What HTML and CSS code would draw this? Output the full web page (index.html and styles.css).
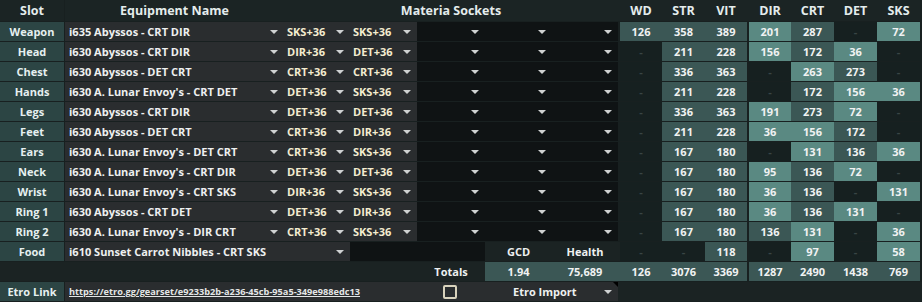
FILE: index.html
```html
<!DOCTYPE html>
<html>
<head>
<meta charset="utf-8">
<link rel="stylesheet" href="styles.css">
</head>
<body>
<div class="sheet">
  <div class="hd c-slot">Slot</div>
  <div class="hd c-eq">Equipment Name</div>
  <div class="hd c-mat">Materia Sockets</div>
  <div class="hd c-sp"></div>
  <div class="hd c-wd">WD</div>
  <div class="hd c-str">STR</div>
  <div class="hd c-vit">VIT</div>
  <div class="hd c-sp2"></div>
  <div class="hd c-dir">DIR</div>
  <div class="hd c-crt">CRT</div>
  <div class="hd c-det">DET</div>
  <div class="hd c-sks">SKS</div>

  <div class="slot c-slot">Weapon</div>
  <div class="eq c-eq"><span>i635 Abyssos - CRT DIR</span><i class="dd"></i></div>
  <div class="mat c-m1"><span>SKS+36</span><i class="dd"></i></div>
  <div class="mat c-m2"><span>SKS+36</span><i class="dd"></i></div>
  <div class="emp c-m3"><i class="dd"></i></div>
  <div class="emp c-m4"><i class="dd"></i></div>
  <div class="emp c-m5"><i class="dd"></i></div>
  <div class="st m c-wd">126</div><div class="st m c-str">358</div><div class="st m c-vit">389</div>
  <div class="st l c-dir">201</div><div class="st m c-crt">287</div><div class="st d c-det">-</div><div class="st l c-sks">72</div>

  <div class="slot c-slot">Head</div>
  <div class="eq c-eq"><span>i630 Abyssos - CRT DIR</span><i class="dd"></i></div>
  <div class="mat c-m1"><span>DIR+36</span><i class="dd"></i></div>
  <div class="mat c-m2"><span>DET+36</span><i class="dd"></i></div>
  <div class="emp c-m3"><i class="dd"></i></div>
  <div class="emp c-m4"><i class="dd"></i></div>
  <div class="emp c-m5"><i class="dd"></i></div>
  <div class="st d c-wd">-</div><div class="st m c-str">211</div><div class="st m c-vit">228</div>
  <div class="st l c-dir">156</div><div class="st m c-crt">172</div><div class="st l c-det">36</div><div class="st d c-sks">-</div>

  <div class="slot c-slot">Chest</div>
  <div class="eq c-eq"><span>i630 Abyssos - DET CRT</span><i class="dd"></i></div>
  <div class="mat c-m1"><span>CRT+36</span><i class="dd"></i></div>
  <div class="mat c-m2"><span>CRT+36</span><i class="dd"></i></div>
  <div class="emp c-m3"><i class="dd"></i></div>
  <div class="emp c-m4"><i class="dd"></i></div>
  <div class="emp c-m5"><i class="dd"></i></div>
  <div class="st d c-wd">-</div><div class="st m c-str">336</div><div class="st m c-vit">363</div>
  <div class="st d c-dir">-</div><div class="st l c-crt">263</div><div class="st m c-det">273</div><div class="st d c-sks">-</div>

  <div class="slot c-slot">Hands</div>
  <div class="eq c-eq"><span>i630 A. Lunar Envoy's - CRT DET</span><i class="dd"></i></div>
  <div class="mat c-m1"><span>DET+36</span><i class="dd"></i></div>
  <div class="mat c-m2"><span>SKS+36</span><i class="dd"></i></div>
  <div class="emp c-m3"><i class="dd"></i></div>
  <div class="emp c-m4"><i class="dd"></i></div>
  <div class="emp c-m5"><i class="dd"></i></div>
  <div class="st d c-wd">-</div><div class="st m c-str">211</div><div class="st m c-vit">228</div>
  <div class="st d c-dir">-</div><div class="st m c-crt">172</div><div class="st l c-det">156</div><div class="st l c-sks">36</div>

  <div class="slot c-slot">Legs</div>
  <div class="eq c-eq"><span>i630 Abyssos - CRT DIR</span><i class="dd"></i></div>
  <div class="mat c-m1"><span>DET+36</span><i class="dd"></i></div>
  <div class="mat c-m2"><span>DET+36</span><i class="dd"></i></div>
  <div class="emp c-m3"><i class="dd"></i></div>
  <div class="emp c-m4"><i class="dd"></i></div>
  <div class="emp c-m5"><i class="dd"></i></div>
  <div class="st d c-wd">-</div><div class="st m c-str">336</div><div class="st m c-vit">363</div>
  <div class="st l c-dir">191</div><div class="st m c-crt">273</div><div class="st l c-det">72</div><div class="st d c-sks">-</div>

  <div class="slot c-slot">Feet</div>
  <div class="eq c-eq"><span>i630 Abyssos - DET CRT</span><i class="dd"></i></div>
  <div class="mat c-m1"><span>CRT+36</span><i class="dd"></i></div>
  <div class="mat c-m2"><span>DIR+36</span><i class="dd"></i></div>
  <div class="emp c-m3"><i class="dd"></i></div>
  <div class="emp c-m4"><i class="dd"></i></div>
  <div class="emp c-m5"><i class="dd"></i></div>
  <div class="st d c-wd">-</div><div class="st m c-str">211</div><div class="st m c-vit">228</div>
  <div class="st l c-dir">36</div><div class="st l c-crt">156</div><div class="st m c-det">172</div><div class="st d c-sks">-</div>

  <div class="slot c-slot">Ears</div>
  <div class="eq c-eq"><span>i630 A. Lunar Envoy's - DET CRT</span><i class="dd"></i></div>
  <div class="mat c-m1"><span>CRT+36</span><i class="dd"></i></div>
  <div class="mat c-m2"><span>SKS+36</span><i class="dd"></i></div>
  <div class="emp c-m3"><i class="dd"></i></div>
  <div class="emp c-m4"><i class="dd"></i></div>
  <div class="emp c-m5"><i class="dd"></i></div>
  <div class="st d c-wd">-</div><div class="st m c-str">167</div><div class="st m c-vit">180</div>
  <div class="st d c-dir">-</div><div class="st l c-crt">131</div><div class="st m c-det">136</div><div class="st l c-sks">36</div>

  <div class="slot c-slot">Neck</div>
  <div class="eq c-eq"><span>i630 A. Lunar Envoy's - CRT DIR</span><i class="dd"></i></div>
  <div class="mat c-m1"><span>DET+36</span><i class="dd"></i></div>
  <div class="mat c-m2"><span>DET+36</span><i class="dd"></i></div>
  <div class="emp c-m3"><i class="dd"></i></div>
  <div class="emp c-m4"><i class="dd"></i></div>
  <div class="emp c-m5"><i class="dd"></i></div>
  <div class="st d c-wd">-</div><div class="st m c-str">167</div><div class="st m c-vit">180</div>
  <div class="st l c-dir">95</div><div class="st m c-crt">136</div><div class="st l c-det">72</div><div class="st d c-sks">-</div>

  <div class="slot c-slot">Wrist</div>
  <div class="eq c-eq"><span>i630 A. Lunar Envoy's - CRT SKS</span><i class="dd"></i></div>
  <div class="mat c-m1"><span>DIR+36</span><i class="dd"></i></div>
  <div class="mat c-m2"><span>SKS+36</span><i class="dd"></i></div>
  <div class="emp c-m3"><i class="dd"></i></div>
  <div class="emp c-m4"><i class="dd"></i></div>
  <div class="emp c-m5"><i class="dd"></i></div>
  <div class="st d c-wd">-</div><div class="st m c-str">167</div><div class="st m c-vit">180</div>
  <div class="st l c-dir">36</div><div class="st m c-crt">136</div><div class="st d c-det">-</div><div class="st l c-sks">131</div>

  <div class="slot c-slot">Ring 1</div>
  <div class="eq c-eq"><span>i630 Abyssos - CRT DET</span><i class="dd"></i></div>
  <div class="mat c-m1"><span>DET+36</span><i class="dd"></i></div>
  <div class="mat c-m2"><span>DIR+36</span><i class="dd"></i></div>
  <div class="emp c-m3"><i class="dd"></i></div>
  <div class="emp c-m4"><i class="dd"></i></div>
  <div class="emp c-m5"><i class="dd"></i></div>
  <div class="st d c-wd">-</div><div class="st m c-str">167</div><div class="st m c-vit">180</div>
  <div class="st l c-dir">36</div><div class="st m c-crt">136</div><div class="st l c-det">131</div><div class="st d c-sks">-</div>

  <div class="slot c-slot">Ring 2</div>
  <div class="eq c-eq"><span>i630 A. Lunar Envoy's - DIR CRT</span><i class="dd"></i></div>
  <div class="mat c-m1"><span>CRT+36</span><i class="dd"></i></div>
  <div class="mat c-m2"><span>SKS+36</span><i class="dd"></i></div>
  <div class="emp c-m3"><i class="dd"></i></div>
  <div class="emp c-m4"><i class="dd"></i></div>
  <div class="emp c-m5"><i class="dd"></i></div>
  <div class="st d c-wd">-</div><div class="st m c-str">167</div><div class="st m c-vit">180</div>
  <div class="st m c-dir">136</div><div class="st l c-crt">131</div><div class="st d c-det">-</div><div class="st l c-sks">36</div>

  <div class="slot c-slot">Food</div>
  <div class="eq c-food"><span>i610 Sunset Carrot Nibbles - CRT SKS</span><i class="dd"></i></div>
  <div class="emp c-m23"></div>
  <div class="lbl c-m4">GCD</div>
  <div class="lbl c-m5sp"><span class="lbl-t">Health</span></div>
  <div class="st d c-wd">-</div><div class="st d c-str">-</div><div class="st m c-vit">118</div>
  <div class="st d c-dir">-</div><div class="st l c-crt">97</div><div class="st d c-det">-</div><div class="st l c-sks">58</div>

  <div class="tot-pad c-totpad"></div>
  <div class="lbl c-m3 tot-lbl">Totals</div>
  <div class="st m c-m4">1.94</div>
  <div class="st m c-m5sp"><span class="lbl-t">75,689</span></div>
  <div class="st m c-wd">126</div><div class="st m c-str">3076</div><div class="st m c-vit">3369</div>
  <div class="st m c-dir">1287</div><div class="st m c-crt">2490</div><div class="st m c-det">1438</div><div class="st m c-sks">769</div>

  <div class="slot c-slot">Etro Link</div>
  <div class="eq c-link"><a class="url">https://etro.gg/gearset/e9233b2b-a236-45cb-95a5-349e988edc13</a></div>
  <div class="eq c-m3 center"><span class="box"></span></div>
  <div class="eq c-m45 imp"><span class="imp-t">Etro Import</span><i class="dd"></i><b class="note"></b></div>
  <div class="foot c-rest"></div>
</div>
</body>
</html>
```

FILE: styles.css
```css
html, body {
  margin: 0;
  padding: 0;
  background: #1a2121;
  width: 922px;
  height: 302px;
  overflow: hidden;
}
.sheet {
  display: grid;
  grid-template-columns:
    [slot] 64px 1px [eq] 218px 1px [m1] 66px [m2] 67px [m3] 68px [m4] 67px [m5] 66px [m5end] 2px
    [wd] 42px [str] 43px [vit] 42px [vitend] 2px [dir] 42px [crt] 43px [det] 43px [sks] 43px [sksend] 2px [end];
  grid-template-rows: 21px;
  grid-auto-rows: 19px;
  row-gap: 1px;
  background: #182020;
  font-family: "Open Sans", "Noto Sans", sans-serif;
  font-weight: 700;
  font-size: 11px;
  color: #eef0f0;
  height: 302px;
}
.sheet > div {
  display: flex;
  align-items: center;
  min-width: 0;
  white-space: nowrap;
  overflow: hidden;
}
.c-slot { grid-column: slot / span 1; }
.c-eq { grid-column: eq / m1; }
.c-mat { grid-column: m1 / m5end; }
.c-sp { grid-column: m5end / wd; }
.c-sp2 { grid-column: vitend / dir; }
.c-m1 { grid-column: m1 / m2; }
.c-m2 { grid-column: m2 / m3; }
.c-m3 { grid-column: m3 / m4; }
.c-m4 { grid-column: m4 / m5; }
.c-m5 { grid-column: m5 / m5end; }
.c-m5sp { grid-column: m5 / wd; }
.c-wd { grid-column: wd / str; }
.c-str { grid-column: str / vit; }
.c-vit { grid-column: vit / vitend; }
.c-dir { grid-column: dir / crt; }
.c-crt { grid-column: crt / det; }
.c-det { grid-column: det / sks; }
.c-sks { grid-column: sks / sksend; }
.c-food { grid-column: eq / m2; }
.c-m23 { grid-column: m2 / m4; }
.c-totpad { grid-column: slot / m3; }
.c-link { grid-column: eq / m3; }
.c-m45 { grid-column: m4 / m5end; }
.c-rest { grid-column: m5end / end; }

.hd {
  background: #1b2424;
  justify-content: center;
  font-size: 12.5px;
  color: #e4ecec;
}
.slot {
  background: #2c4544;
  justify-content: center;
  color: #e6f0f0;
}
.eq {
  background: #2a2d2f;
  padding: 0 6px 0 4px;
  justify-content: space-between;
}
.mat {
  background: #2a2d2f;
  padding: 0 6px 0 3px;
  justify-content: space-between;
  color: #f4ecd0;
}
.emp {
  background: #0f1314;
  justify-content: flex-end;
  padding-right: 6px;
}
.dd {
  display: block;
  width: 0;
  height: 0;
  border-left: 4px solid transparent;
  border-right: 4px solid transparent;
  border-top: 4px solid #cfd2d2;
  flex: none;
}
.st {
  justify-content: center;
  color: #f0f2f2;
}
.st.d { background: #162020; color: #394545; }
.st.m { background: #3b5755; }
.st.l { background: #5a8982; }
.lbl {
  background: #1b2323;
  justify-content: center;
}
.c-m5sp { padding-right: 2px; }
.tot-pad { background: #1b2323; }
.tot-lbl { background: #1b2323; }
.url {
  color: #e4e6e6;
  text-decoration: underline;
  font-size: 9.2px;
}
.center { justify-content: center; }
.box {
  display: block;
  width: 10px;
  height: 10px;
  border: 2px solid #d8d2bc;
  border-radius: 2px;
}
.imp {
  position: relative;
  padding-left: 28px;
}
.imp-t { color: #eef0f0; }
.note {
  position: absolute;
  top: 0;
  right: 0;
  width: 0;
  height: 0;
  border-left: 5px solid transparent;
  border-top: 5px solid #000;
}
.foot { background: #1b2323; }
```
